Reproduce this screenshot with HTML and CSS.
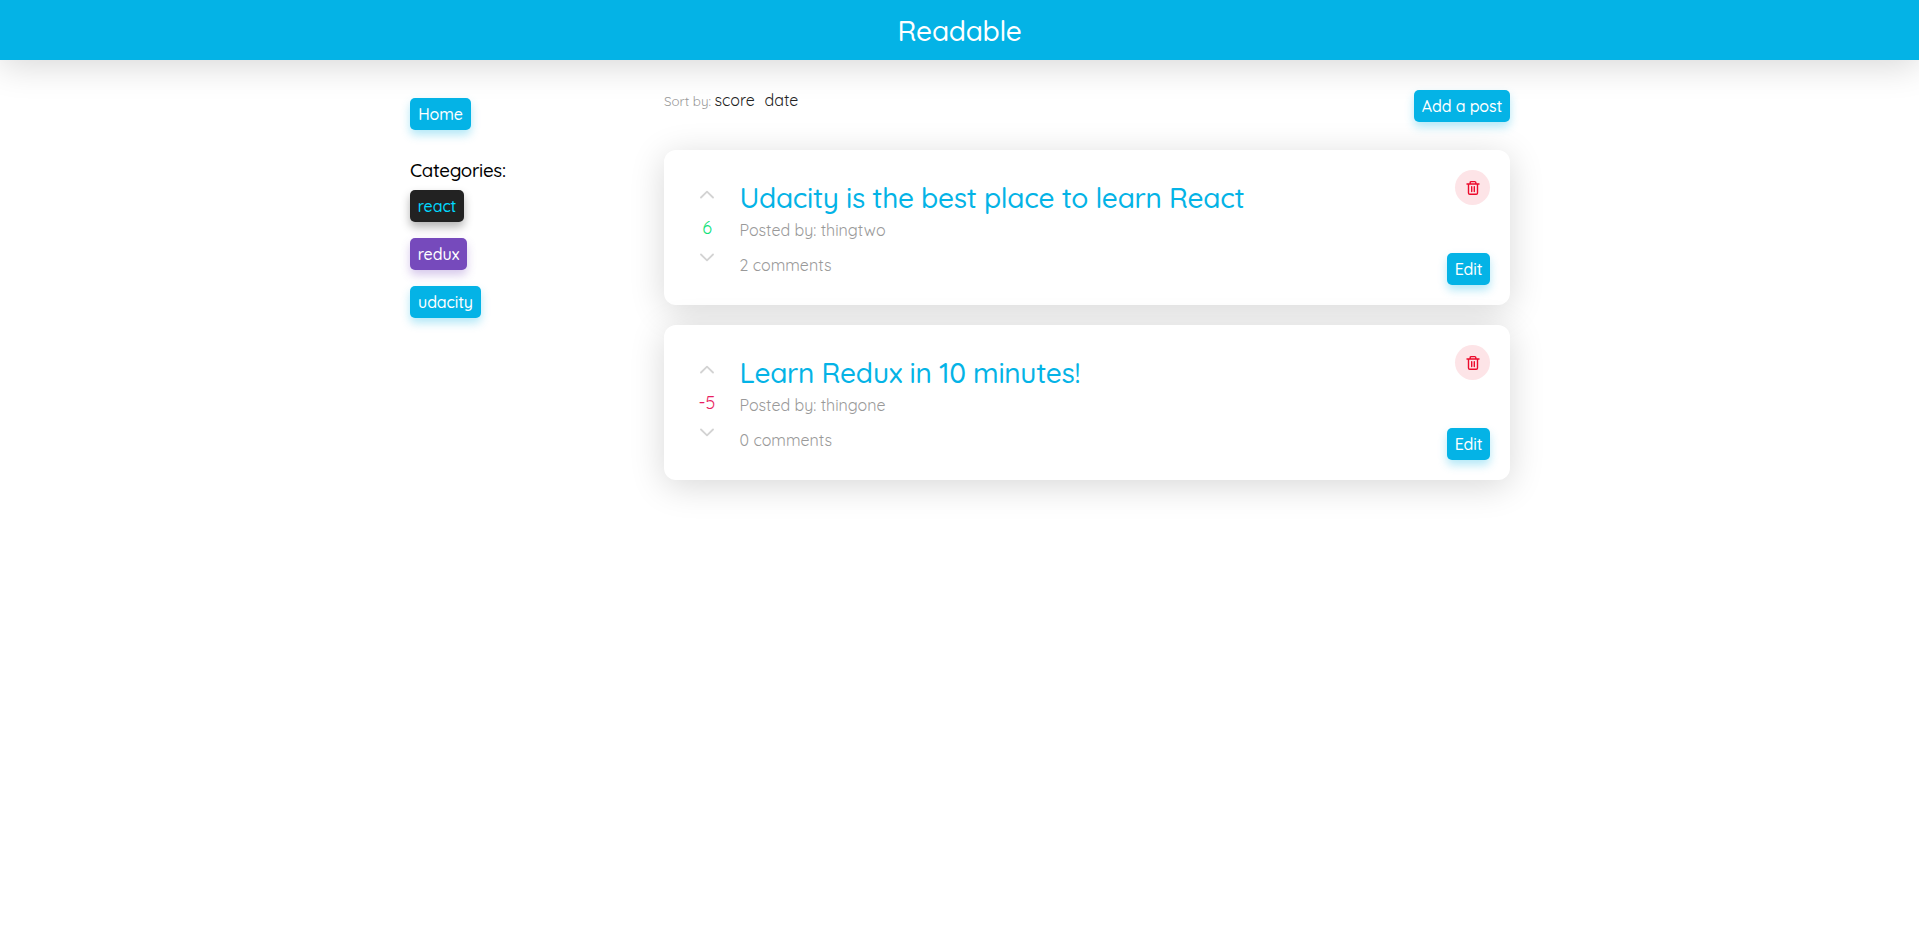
FILE: index.html
```html
<!DOCTYPE html>
<html lang="en">
<head>
<meta charset="utf-8">
<title>Readable</title>
<link rel="stylesheet" href="styles.css">
</head>
<body>
<svg class="sprite" aria-hidden="true">
  <symbol id="trash" viewBox="0 0 14 16"><path d="M1 4h12M4.2 4V2.6q0-1 1-1h3.6q1 0 1 1V4M2.5 4v8.9q0 1.3 1.3 1.3h6.4q1.3 0 1.3-1.3V4M5.7 6.6v5M8.3 6.6v5"/></symbol>
  <symbol id="up" viewBox="0 0 14 8"><path d="M1 7 7 1.2 13 7"/></symbol>
  <symbol id="down" viewBox="0 0 14 8"><path d="M1 1 7 6.8 13 1"/></symbol>
</svg>
<header class="header"><h1 class="brand"><span>Readable</span></h1></header>
<div class="container">
  <aside class="sidebar">
    <a class="btn home"><span>Home</span></a>
    <h2 class="side-title"><span>Categories:</span></h2>
    <nav class="categories">
      <a class="btn react"><span>react</span></a>
      <a class="btn redux"><span>redux</span></a>
      <a class="btn udacity"><span>udacity</span></a>
    </nav>
  </aside>
  <main class="main">
    <div class="toolbar">
      <div class="sort"><span class="sort-label">Sort by:</span><span class="sort-score">score</span><span class="sort-date">date</span></div>
      <a class="btn add"><span>Add a post</span></a>
    </div>
    <article class="card">
      <div class="vote">
        <svg class="arrow"><use href="#up"/></svg>
        <span class="score positive">6</span>
        <svg class="arrow"><use href="#down"/></svg>
      </div>
      <div class="content">
        <h3 class="title">Udacity is the best place to learn React</h3>
        <p class="meta author">Posted by: thingtwo</p>
        <p class="meta">2 comments</p>
      </div>
      <div class="actions">
        <button class="delete"><svg class="trash"><use href="#trash"/></svg></button>
        <a class="btn edit"><span>Edit</span></a>
      </div>
    </article>
    <article class="card">
      <div class="vote">
        <svg class="arrow"><use href="#up"/></svg>
        <span class="score negative">-5</span>
        <svg class="arrow"><use href="#down"/></svg>
      </div>
      <div class="content">
        <h3 class="title">Learn Redux in 10 minutes!</h3>
        <p class="meta author">Posted by: thingone</p>
        <p class="meta">0 comments</p>
      </div>
      <div class="actions">
        <button class="delete"><svg class="trash"><use href="#trash"/></svg></button>
        <a class="btn edit"><span>Edit</span></a>
      </div>
    </article>
  </main>
</div>
</body>
</html>
```
FILE: styles.css
```css
* { box-sizing: border-box; }
body { margin: 0; min-height: 100vh; background: #fff; color: #000; font: 400 16px/20px Quicksand, Lato, sans-serif; }
h1, h2, h3, p { margin: 0; font-weight: 500; }
.sprite { display: none; }
.header { height: 60px; display: flex; align-items: center; justify-content: center; background: #04b3e6; color: #fff; box-shadow: 0 6px 35px rgba(0,0,0,.155); }
.brand { font-size: 28px; line-height: 36px; letter-spacing: -.3px; padding-top: 2px; }
.container { width: 1100px; margin: 0 409px 0 410px; display: flex; justify-content: space-between; }
.sidebar { padding-top: 38px; width: 200px; }
.btn { display: flex; align-items: center; justify-content: center; width: fit-content; height: 32px; border-radius: 5px; color: #fff; background: #04b3e6; box-shadow: 0 5px 10px rgba(4,179,230,.3); white-space: nowrap; font-weight: 500; letter-spacing: -.12px; }
.home { width: 61px; }
.side-title { margin: 30px 0 10px; font-size: 18.72px; line-height: 20px; letter-spacing: -.3px; }
.categories { display: flex; flex-direction: column; gap: 16px; }
.react { width: 54px; background: #222; color: #00d8ff; box-shadow: 0 5px 10px rgba(0,0,0,.3); }
.redux { width: 57px; background: #764abc; box-shadow: 0 5px 10px rgba(118,74,188,.3); }
.udacity { width: 71px; }
.main { width: 846px; padding-top: 30px; }
.toolbar { display: flex; justify-content: space-between; height: 60px; }
.sort { display: flex; align-items: baseline; color: #222; }
.sort-label { width: 50.5px; font-size: 13.33px; color: #999; }
.sort-score { width: 50px; }
.add { width: 96px; }
.card { display: flex; height: 155px; margin-bottom: 20px; padding: 20px; border-radius: 12px; background: #fff; box-shadow: 0 6px 35px rgba(0,0,0,.155); }
.card:last-child { margin-bottom: 60px; }
.vote { display: flex; flex-direction: column; align-items: center; width: 46px; padding-top: 20px; }
.arrow { width: 14px; height: 9px; fill: none; stroke: #d3d3d3; stroke-width: 1.8; stroke-linecap: round; stroke-linejoin: round; }
.score { font-size: 18px; line-height: 20px; margin: 19px 0 15px; }
.positive { color: #14e27c; }
.negative { color: #e91e63; }
.content { flex: 1; padding: 10px 0 0 9.5px; }
.title { color: #04b3e6; font-size: 28px; line-height: 36px; letter-spacing: -.3px; white-space: nowrap; }
.meta { color: #999; font-weight: 400; line-height: 20px; }
.author { margin: 4px 0 15px; }
.actions { display: flex; flex-direction: column; align-items: flex-end; justify-content: space-between; }
.delete { display: grid; place-items: center; width: 35px; height: 35px; padding: 0; border: 0; border-radius: 50%; background: #fde4e7; }
.trash { width: 14px; height: 16px; fill: none; stroke: #ec0b2c; stroke-width: 1.4; stroke-linejoin: round; stroke-linecap: round; }
.edit { width: 43px; }
```
